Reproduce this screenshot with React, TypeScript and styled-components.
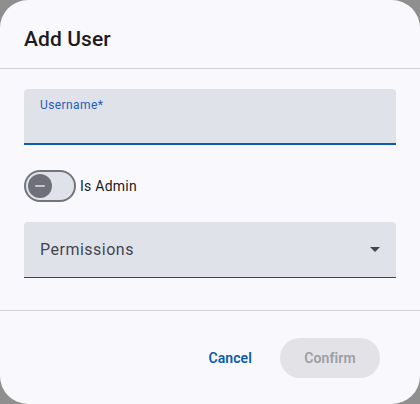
import React from 'react';
import styled, { createGlobalStyle } from 'styled-components';

const GlobalStyle = createGlobalStyle`
  html, body {
    margin: 0;
    padding: 0;
    background: #8f8f8f;
  }
  body {
    font-family: 'Roboto', 'Noto Sans', sans-serif;
    color: #1b1b21;
  }
`;

const Dialog = styled.div`
  width: 420px;
  height: 404px;
  box-sizing: border-box;
  background: #f9f8fd;
  border-radius: 28px;
  display: flex;
  flex-direction: column;
  overflow: hidden;
`;

const Header = styled.div`
  height: 69px;
  box-sizing: border-box;
  padding: 25px 24px 0;
  border-bottom: 1px solid #d0d0d6;
`;

const Title = styled.h2`
  margin: 0;
  font-size: 21px;
  line-height: 28px;
  font-weight: 500;
  letter-spacing: 0.1px;
  color: #1b1b21;
`;

const Body = styled.div`
  padding: 20px 24px 32px;
  display: flex;
  flex-direction: column;
  border-bottom: 1px solid #d0d0d6;
`;

const FilledField = styled.div<{ $focused?: boolean }>`
  position: relative;
  height: 56px;
  box-sizing: border-box;
  background: #e0e2ea;
  border-radius: 4px 4px 0 0;
  border-bottom: ${(p) => (p.$focused ? '2px solid #0b5cb4' : '1px solid #44464f')};
  padding: 0 16px;
  display: flex;
  align-items: center;
`;

const FloatingLabel = styled.span`
  position: absolute;
  top: 8px;
  left: 16px;
  font-size: 12px;
  line-height: 16px;
  letter-spacing: 0.4px;
  color: #1d60b8;
`;

const Placeholder = styled.span`
  font-size: 16px;
  letter-spacing: 0.5px;
  color: #44464f;
  flex: 1;
`;

const ToggleRow = styled.label`
  display: flex;
  align-items: center;
  gap: 4px;
  margin: 25px 0 20px;
  font-size: 14px;
  letter-spacing: 0.25px;
  color: #1b1b21;
`;

const Track = styled.span`
  width: 52px;
  height: 32px;
  box-sizing: border-box;
  border: 2px solid #72747e;
  border-radius: 16px;
  background: #e0e2ea;
  display: flex;
  align-items: center;
  padding-left: 2px;
`;

const Thumb = styled.span`
  width: 24px;
  height: 24px;
  border-radius: 50%;
  background: #6f7079;
  display: flex;
  align-items: center;
  justify-content: center;
`;

const Footer = styled.div`
  flex: 1;
  display: flex;
  justify-content: flex-end;
  align-items: flex-start;
  gap: 16px;
  padding: 27px 40px 0 24px;
`;

const TextButton = styled.button`
  height: 40px;
  padding: 0 12px;
  border: none;
  background: transparent;
  font-family: inherit;
  font-size: 14px;
  font-weight: 600;
  letter-spacing: 0.1px;
  color: #0b5cad;
  cursor: pointer;
`;

const FilledButton = styled.button`
  width: 100px;
  height: 40px;
  border: none;
  border-radius: 20px;
  background: #e2e2e7;
  font-family: inherit;
  font-size: 14px;
  font-weight: 600;
  letter-spacing: 0.1px;
  color: #9d9ea3;
  &:disabled {
    cursor: default;
  }
`;

export default function App() {
  return (
    <>
      <GlobalStyle />
      <Dialog role="dialog" aria-labelledby="add-user-title">
        <Header>
          <Title id="add-user-title">Add User</Title>
        </Header>
        <Body>
          <FilledField $focused>
            <FloatingLabel>Username*</FloatingLabel>
          </FilledField>
          <ToggleRow>
            <Track>
              <Thumb>
                <svg width="12" height="12" viewBox="0 0 12 12">
                  <rect x="1" y="5.25" width="10" height="1.5" rx="0.75" fill="#e0e2ea" />
                </svg>
              </Thumb>
            </Track>
            Is Admin
          </ToggleRow>
          <FilledField>
            <Placeholder>Permissions</Placeholder>
            <svg width="10" height="5" viewBox="0 0 10 5">
              <path d="M0 0h10L5 5z" fill="#44464f" />
            </svg>
          </FilledField>
        </Body>
        <Footer>
          <TextButton>Cancel</TextButton>
          <FilledButton disabled>Confirm</FilledButton>
        </Footer>
      </Dialog>
    </>
  );
}
